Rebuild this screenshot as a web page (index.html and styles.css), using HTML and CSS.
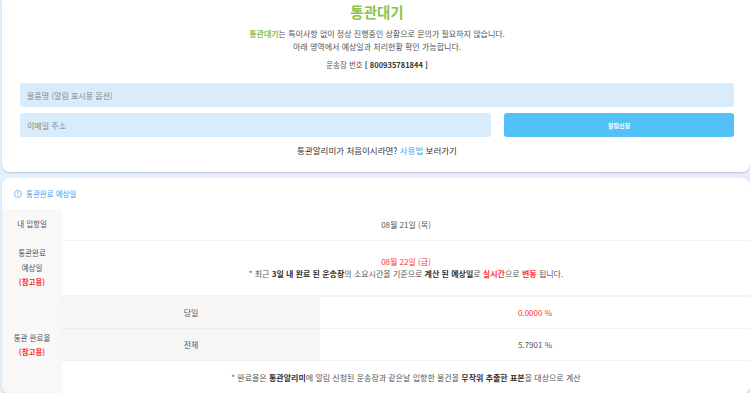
FILE: index.html
```html
<!DOCTYPE html>
<html lang="ko">
<head>
    <meta charset="UTF-8">
    <meta name="viewport" content="width=device-width, initial-scale=1.0">
    <title>통관대기</title>
    <link rel="stylesheet" href="styles.css">
</head>
<body>
    <div class="page">
        <div class="card top-card">
            <h1 class="status">통관대기</h1>
            <p class="desc">
                <b class="green">통관대기</b>는 특이사항 없이 정상 진행중인 상황으로 문의가 필요하지 않습니다.<br>
                아래 영역에서 예상일과 처리현황 확인 가능합니다.
            </p>
            <p class="invoice">운송장 번호 <b>[ 800935781844 ]</b></p>
            <form class="alarm-form">
                <input type="text" class="field wide" placeholder="물품명 (알림 표시용 옵션)">
                <input type="text" class="field" placeholder="이메일 주소">
                <button type="button" class="alarm-btn">알림신청</button>
            </form>
            <p class="guide">통관알리미가 처음이시라면? <a href="#" class="blue">사용법</a> 보러가기</p>
        </div>

        <div class="card info-card">
            <div class="info-head">
                <svg class="info-icon" width="8" height="8" viewBox="0 0 16 16">
                    <circle cx="8" cy="8" r="7" fill="none" stroke="currentColor" stroke-width="1.4"/>
                    <rect x="7.3" y="3.6" width="1.4" height="5.6" fill="currentColor"/>
                    <rect x="7.3" y="10.6" width="1.4" height="1.6" fill="currentColor"/>
                </svg>
                통관완료 예상일
            </div>
            <table class="info">
                <tr class="row-in">
                    <th>내 입항일</th>
                    <td colspan="2">08월 21일 (목)</td>
                </tr>
                <tr class="row-expect">
                    <th>통관완료<br>예상일<br><span class="ref">(참고용)</span></th>
                    <td colspan="2">
                        <span class="red">08월 22일 (금)</span><br>
                        * 최근 <b>3일 내 완료 된 운송장</b>의 소요시간을 기준으로 <b>계산 된 예상일</b>로 <b class="red">실시간</b>으로 <b class="red">변동</b> 됩니다.
                    </td>
                </tr>
                <tr class="row-rate first">
                    <th rowspan="3" class="rate-th">통관 완료율<br><span class="ref">(참고용)</span></th>
                    <td class="sub">당일</td>
                    <td class="red">0.0000 %</td>
                </tr>
                <tr class="row-rate">
                    <td class="sub">전체</td>
                    <td>5.7901 %</td>
                </tr>
                <tr class="row-note">
                    <td colspan="2">* 완료율은 <b>통관알리미</b>에 알림 신청된 운송장과 같은날 입항한 물건을 <b>무작위 추출한 표본</b>을 대상으로 계산</td>
                </tr>
            </table>
        </div>
    </div>
</body>
</html>
```

FILE: styles.css
```css
body {
    margin: 0;
    padding: 0;
    font-family: "Noto Sans CJK KR", "Noto Sans", sans-serif;
    font-size: 8px;
    color: #555555;
    background: linear-gradient(90deg, #e4f2fd, #f3e7fb);
    min-height: 393px;
}

.page {
    padding-left: 2px;
}

.card {
    background-color: #ffffff;
    border-radius: 8px;
    box-shadow: 0 1px 2px rgba(0, 0, 0, 0.18);
}

.top-card {
    padding: 2px 16px 15px 18px;
    text-align: center;
    border-radius: 0 0 8px 8px;
}

.status {
    margin: 0;
    font-size: 14.5px;
    line-height: 20px;
    color: #8bc34a;
}

.blue {
    color: #42a5f5;
    text-decoration: none;
}

.red {
    color: #ff3030;
}

b {
    color: #333333;
}

b.green {
    color: #8bc34a;
}

b.red {
    color: #ff3030;
}

.desc {
    margin: 5px 0 0;
    line-height: 13px;
}

.invoice {
    margin: 5px 0 0;
    line-height: 13px;
    font-size: 7.5px;
}

.alarm-form {
    display: grid;
    grid-template-columns: 1fr 230px;
    column-gap: 13px;
    row-gap: 6px;
    margin-top: 12px;
}

.field {
    height: 24px;
    border: none;
    border-radius: 3px;
    background-color: #d8ecfb;
    padding: 0 7px;
    font-family: inherit;
    font-size: 8px;
    color: #555555;
    box-sizing: border-box;
}

.field::placeholder {
    color: #8a8a8a;
}

.wide {
    grid-column: 1 / 3;
}

.alarm-btn {
    height: 24px;
    border: none;
    border-radius: 3px;
    background-color: #52c1f5;
    color: #ffffff;
    font-family: inherit;
    font-size: 6px;
    font-weight: bold;
    cursor: pointer;
}

.guide {
    margin: 7px 0 0;
    line-height: 13px;
    font-size: 8.5px;
    color: #333333;
}

.info-card {
    margin-top: 6px;
    overflow: hidden;
}

.info-head {
    display: flex;
    align-items: center;
    gap: 4px;
    height: 31px;
    padding-left: 12px;
    font-size: 7.5px;
    color: #42a5f5;
}

.info {
    width: 100%;
    border-collapse: collapse;
    text-align: center;
}

.info th {
    width: 60px;
    padding: 0;
    font-size: 7.5px;
    font-weight: normal;
    background-color: #f8f8f8;
    line-height: 14.5px;
}

.info td {
    padding: 0;
    border-bottom: 1px solid #f2f2f2;
}

.ref {
    color: #ff3030;
    font-weight: bold;
}

.row-in {
    height: 31px;
}

.row-expect {
    height: 56px;
}

.row-expect td {
    line-height: 12px;
    border-bottom: none;
}

.row-rate {
    height: 32px;
}

.row-rate.first td {
    border-top: 2px solid #f2f2f2;
}

.rate-th {
    line-height: 14px;
}

.info td.sub {
    width: 258px;
    background-color: #f6f6f6;
    border-bottom: 1px solid #eeeeee;
}

.row-note {
    height: 34px;
}

.row-note td {
    border-bottom: none;
}
```
